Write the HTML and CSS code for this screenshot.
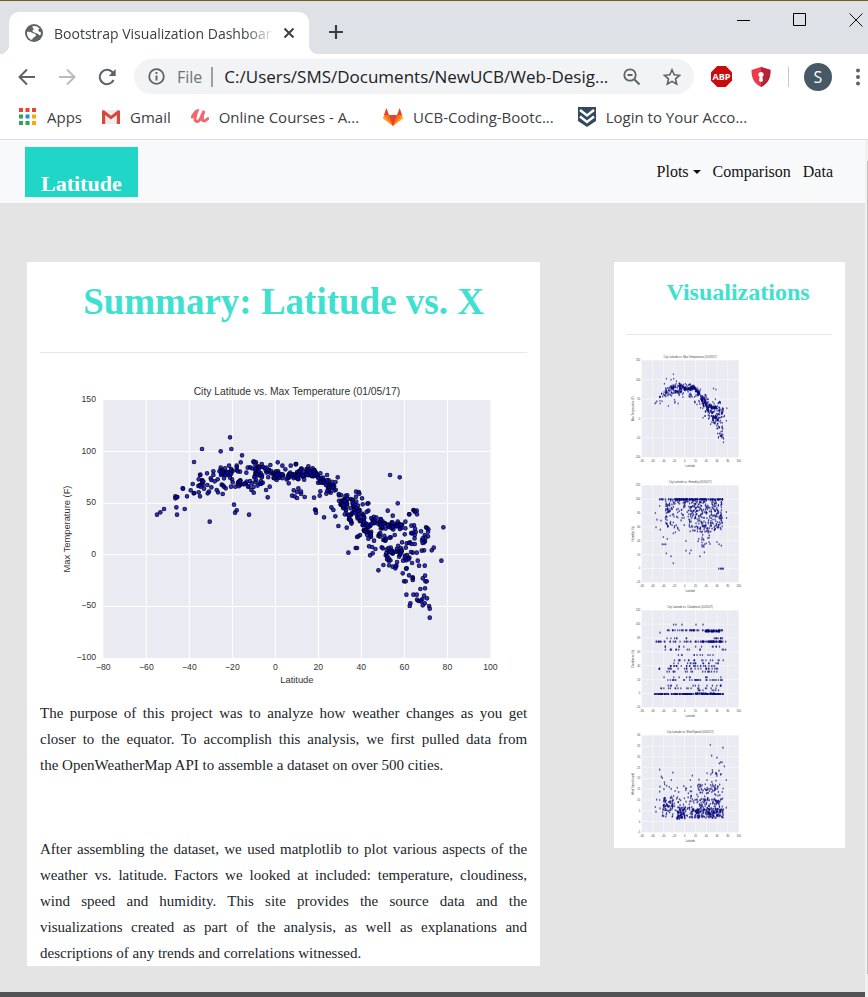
FILE: index.html
```
<!DOCTYPE html>
<html lang="en">
<head>
<meta charset="utf-8">
<title>Bootstrap Visualization Dashboard</title>
<link rel="stylesheet" href="styles.css">
</head>
<body>
<header class="browser">
  <div class="tabstrip">
    <div class="tab">
      <svg class="globe" viewBox="0 0 18 18"><circle cx="9" cy="9" r="9" fill="#5f6368"/><path d="M2 8c2-.5 4 .2 5.500 1 1.500.8 3.500.5 3.500 2s-1.500 1.500-2.500 2.500-1 2-2 2.300C4 15 2 12 2 9zM9 2c2 0 4 .8 5.500 2.500C13.500 5 13 6 13.500 7s2 1 2.500 1.500c0 1-.3 2-1 3-1-.5-1.500-1.500-3-2S8 8.500 7.500 7.300 9 6 8.800 5 7 4 7.500 2.200z" fill="#fff"/></svg>
      <span class="tab-title">Bootstrap Visualization Dashboar</span>
      <button class="icon-btn" aria-label="Close tab"><svg width="12" height="12" viewBox="0 0 12 12"><path d="M1.500 1.500l9 9M10.500 1.500l-9 9" stroke="#3c4043" stroke-width="2"/></svg></button>
    </div>
    <button class="icon-btn new-tab" aria-label="New tab"><svg width="16" height="16" viewBox="0 0 16 16"><path d="M8 1v14M1 8h14" stroke="#3c4043" stroke-width="2.200"/></svg></button>
    <div class="window-buttons">
      <button class="icon-btn" aria-label="Minimize"><svg width="14" height="14" viewBox="0 0 14 14"><path d="M0 7.500h13" stroke="#000"/></svg></button>
      <button class="icon-btn" aria-label="Maximize"><svg width="14" height="14" viewBox="0 0 14 14"><path d="M.5.5h12v12H.5z" stroke="#000" fill="none"/></svg></button>
      <button class="icon-btn" aria-label="Close"><svg width="14" height="14" viewBox="0 0 14 14"><path d="M.5.5l13 13M13.500.5l-13 13" stroke="#111"/></svg></button>
    </div>
  </div>
  <div class="toolbar">
    <button class="icon-btn" aria-label="Back"><svg width="18" height="18" viewBox="0 0 18 18"><path d="M17 9H2M9 1.500L1.500 9 9 16.500" stroke="#5f6368" stroke-width="2" fill="none"/></svg></button>
    <button class="icon-btn" aria-label="Forward"><svg width="18" height="18" viewBox="0 0 18 18"><path d="M1 9h15M9 1.500L16.500 9 9 16.500" stroke="#babcbe" stroke-width="2" fill="none"/></svg></button>
    <button class="icon-btn" aria-label="Reload"><svg width="18" height="18" viewBox="0 0 18 18"><path d="M15.500 12A7.200 7.200 0 1 1 14 3.800L16 6" stroke="#5f6368" stroke-width="2.100" fill="none"/><path d="M17.700 1v7h-7z" fill="#5f6368"/></svg></button>
    <div class="omnibox">
      <svg width="17" height="17" viewBox="0 0 17 17"><circle cx="8.500" cy="8.500" r="7.300" stroke="#5f6368" stroke-width="1.800" fill="none"/><path d="M8.500 7.500v5M8.500 4v2" stroke="#5f6368" stroke-width="1.900"/></svg>
      <label class="scheme" for="url">File</label>
      <input id="url" class="url" type="text" value="C:/Users/SMS/Documents/NewUCB/Web-Desig...">
      <button class="icon-btn" aria-label="Zoom"><svg width="18" height="18" viewBox="0 0 18 18"><circle cx="7" cy="7" r="5.700" stroke="#5f6368" stroke-width="1.800" fill="none"/><path d="M11.500 11.500l5 5M4.500 7h5" stroke="#5f6368" stroke-width="2"/></svg></button>
      <button class="icon-btn star" aria-label="Bookmark"><svg width="18" height="18" viewBox="0 0 18 18"><path d="M9 1.800l2.200 5 5.400.5-4.100 3.600 1.200 5.300L9 13.400l-4.700 2.800 1.200-5.300L1.400 7.300l5.400-.5z" stroke="#5f6368" stroke-width="1.600" fill="none"/></svg></button>
    </div>
    <button class="icon-btn" aria-label="Adblock Plus"><svg width="21" height="21" viewBox="0 0 21 21"><path d="M6.200 0h8.600L21 6.200v8.600L14.800 21H6.200L0 14.800V6.200z" fill="#c70d0d"/><text class="abp" x="10.500" y="14" text-anchor="middle">ABP</text></svg></button>
    <button class="icon-btn shield" aria-label="Shield"><svg width="20" height="20" viewBox="0 0 20 20"><path d="M10 0l9.500 3c0 8-2 13-9.500 17C2.500 16 .5 11 .5 3z" fill="#ee3a4a"/><path d="M10 0l9.500 3c0 8-2 13-9.500 17z" fill="#b32436"/><path d="M10 5a2.600 2.600 0 0 1 1.400 4.800L12 14l-2 1-2-1 .6-4.200A2.600 2.600 0 0 1 10 5z" fill="#fff"/></svg></button>
    <span class="divider"></span>
    <button class="avatar" aria-label="Profile">S</button>
    <button class="icon-btn" aria-label="Menu"><svg width="4" height="18" viewBox="0 0 4 18"><g fill="#5f6368"><circle cx="2" cy="2.500" r="2"/><circle cx="2" cy="9" r="2"/><circle cx="2" cy="15.500" r="2"/></g></svg></button>
  </div>
  <nav class="bookmarks" aria-label="Bookmarks">
    <a href="#"><svg width="18" height="18" viewBox="0 0 18 18"><path d="M0 0h4v4H0zM6.500 0h4v4h-4zM13 0h4v4h-4z" fill="#ea4335"/><path d="M0 6.500h4v4H0zM0 13h4v4H0zM6.500 13h4v4h-4z" fill="#34a053"/><path d="M6.500 6.500h4v4h-4z" fill="#2b85f0"/><path d="M13 6.500h4v4h-4zM13 13h4v4h-4z" fill="#fba90a"/></svg>Apps</a>
    <a href="#"><svg width="18" height="14" viewBox="0 0 18 14"><path d="M1 0h16v14H1z" fill="#eee"/><path d="M0 1.500V14h3.200V5L9 9.500 14.800 5v9H18V1.500C18 0 16.500 0 16 .3L9 5.800 2 .3C1.500 0 0 0 0 1.500z" fill="#d9463a"/></svg>Gmail</a>
    <a href="#"><svg width="18" height="16" viewBox="0 0 18 16"><path d="M1 8c2-2 3-5.500 5-6-2 5-3.500 11 .5 10.500C10 12 11 5 13 2c-2 5-2.500 10 0 10 1.500 0 2.500-1 4-2.500" stroke="#f2676b" stroke-width="3" stroke-linecap="round" fill="none"/></svg>Online Courses - A...</a>
    <a href="#" class="wide"><svg width="20" height="18" viewBox="0 0 20 18"><path d="M10 18L0 10.500 1 7h18l1 3.500z" fill="#fca326"/><path d="M10 18L1 7h18z" fill="#fc6d26"/><path d="M10 18L6 7h8zM3.300 0L6 7H1zM16.700 0L19 7h-5z" fill="#e24329"/></svg>UCB-Coding-Bootc...</a>
    <a href="#" class="wide"><svg width="18" height="20" viewBox="0 0 18 20"><path d="M0 0h18v14l-9 6-9-6z" fill="#34495e"/><path d="M2 3l7 5.500L16 3M2 9.500L9 15l7-5.500" stroke="#fff" stroke-width="2.400" fill="none"/></svg>Login to Your Acco...</a>
  </nav>
</header>
<div class="viewport">
  <div class="page">
    <nav class="navbar">
      <a class="brand" href="#">Latitude</a>
      <div class="links">
        <button class="dropdown">Plots<span class="caret"></span></button>
        <a href="#">Comparison</a>
        <a href="#">Data</a>
      </div>
    </nav>
    <main class="content">
      <article class="card summary">
        <h1>Summary: Latitude vs. X</h1>
        <hr>
        <svg id="main-chart" class="main-chart" viewBox="-30 0 1461 960" role="img" aria-label="City Latitude vs. Max Temperature"></svg>
        <p>The purpose of this project was to analyze how weather changes as you get closer to the equator. To accomplish this analysis, we first pulled data from the&nbsp;OpenWeatherMap API to assemble a dataset on over 500 cities.</p>
        <p>After assembling the dataset, we used matplotlib to plot various aspects of the weather vs. latitude. Factors we looked at included: temperature, cloudiness, wind speed and humidity. This site provides the source data and the visualizations created as part of the analysis, as well as explanations and descriptions of any trends and correlations witnessed.</p>
      </article>
      <aside class="card visualizations">
        <h2>Visualizations</h2>
        <hr>
        <div class="thumbs">
          <a href="#" aria-label="Max temperature"><svg id="thumb-temp" viewBox="0 0 375 375"></svg></a>
          <a href="#" aria-label="Humidity"><svg id="thumb-humidity" viewBox="0 0 375 375"></svg></a>
          <a href="#" aria-label="Cloudiness"><svg id="thumb-cloud" viewBox="0 0 375 375"></svg></a>
          <a href="#" aria-label="Wind speed"><svg id="thumb-wind" viewBox="0 0 375 375"></svg></a>
        </div>
      </aside>
    </main>
    <footer class="footer"></footer>
  </div>
  <div class="scrollbar"><div class="scroll-thumb"></div></div>
</div>
<script src="charts.js"></script>
</body>
</html>
```
FILE: styles.css
```
* { box-sizing: border-box; }
html, body { height: 100%; margin: 0; }
body {
  display: flex;
  flex-direction: column;
  overflow: hidden;
  background: #fff;
  font-family: "Liberation Serif", serif;
  font-size: 16px;
  color: #212529;
}
button { border: 0; padding: 0; background: none; font: inherit; color: inherit; }
a { color: inherit; text-decoration: none; }
svg { display: block; flex: none; }
.icon-btn { display: flex; flex: none; }

/* Browser frame */
.browser {
  flex: none;
  border-top: 1px solid #77591f;
  border-bottom: 1px solid #dadce0;
  font-family: "Open Sans", sans-serif;
  color: #3c4043;
}
.tabstrip {
  display: flex;
  align-items: flex-end;
  height: 53px;
  padding-left: 9px;
  background: #dee1e6;
}
.tab {
  position: relative;
  display: flex;
  align-items: center;
  width: 300px;
  height: 42px;
  padding: 0 14px 0 16px;
  border-radius: 10px 10px 0 0;
  background: #fff;
}
.tab::before, .tab::after {
  content: "";
  position: absolute;
  bottom: 0;
  width: 9px;
  height: 9px;
}
.tab::before { left: -9px; background: radial-gradient(circle at 0 0, transparent 9px, #fff 9px); }
.tab::after { right: -9px; background: radial-gradient(circle at 100% 0, transparent 9px, #fff 9px); }
.globe { width: 18px; height: 18px; }
.tab-title {
  flex: 1;
  margin: 0 8px 0 11px;
  white-space: nowrap;
  font-size: 14px;
  -webkit-mask-image: linear-gradient(to left, transparent, #000 30px);
  mask-image: linear-gradient(to left, transparent, #000 30px);
}
.new-tab { margin: 0 0 14px 19px; }
.window-buttons { display: flex; gap: 42px; margin: 0 5px 27px auto; }
.toolbar {
  display: flex;
  align-items: center;
  gap: 22px;
  height: 45px;
  padding: 0 8px 0 18px;
}
.omnibox {
  display: flex;
  flex: 1;
  align-items: center;
  min-width: 0;
  height: 35px;
  margin-left: -4px;
  margin-right: -5px;
  padding: 0 13px 0 14px;
  border-radius: 18px;
  background: #f1f3f4;
}
.scheme {
  margin: 0 11px 0 12px;
  padding-right: 9px;
  border-right: 2px solid #9aa0a6;
  font-size: 16px;
  line-height: 20px;
  color: #6f7377;
}
.url {
  flex: 1;
  min-width: 0;
  height: 28px;
  padding: 0;
  border: 0;
  background: none;
  font: 17px "Open Sans", sans-serif;
  color: #202124;
}
.star { margin-left: 22px; }
.abp { font: bold 9px "Open Sans", sans-serif; fill: #fff; }
.shield { margin-left: -3px; }
.divider { width: 1px; height: 20px; margin: 0 -7px 0 -5px; background: #c6c8cb; }
.avatar {
  flex: none;
  width: 28px;
  height: 28px;
  margin-right: 2px;
  border-radius: 50%;
  background: #455a64;
  color: #fff;
  font: 16px "Open Sans", sans-serif;
}
.bookmarks {
  display: flex;
  align-items: center;
  gap: 20px;
  height: 40px;
  padding: 0 19px 4px;
  font-size: 15px;
  white-space: nowrap;
}
.bookmarks a { display: flex; align-items: center; gap: 10px; }
.bookmarks .wide { margin-left: 4px; }

/* Page */
.viewport { display: flex; flex: 1; min-height: 0; }
.page { display: flex; flex: 1; flex-direction: column; min-width: 0; background: #e4e4e4; }
.scrollbar { width: 3px; padding: 21px 0 23px 2px; background: #f1f1f1; }
.scroll-thumb { height: 100%; background: #c1c1c1; }
.navbar {
  display: flex;
  align-items: center;
  justify-content: space-between;
  height: 63px;
  padding: 0 32px 0 25px;
  background: #f8f9fb;
}
.brand {
  padding: 25px 16px 1px;
  background: #20d6c7;
  color: #fff;
  font-size: 22px;
  line-height: 24px;
  font-weight: bold;
}
.links { display: flex; align-items: center; gap: 12px; font-size: 16px; color: #111; }
.dropdown { display: flex; align-items: center; gap: 4px; }
.caret { border: 4px solid transparent; border-top-color: #111; border-bottom: 0; }
.content {
  display: grid;
  grid-template-columns: 20fr 9fr;
  align-items: start;
  column-gap: 74px;
  padding: 59px 20px 26px 27px;
}
.card { background: #fff; }
.card hr { margin: 0; border: 0; border-top: 1px solid #e8e8e8; }
.summary { padding: 0 13px; }
.summary h1 {
  margin: 0 0 28px;
  padding-top: 18px;
  font-size: 37px;
  line-height: 44px;
  text-align: center;
  color: #40e0d0;
}
.main-chart { width: 100%; margin: 22px 0 5px; }
.summary p { margin: 0 0 58px; font-size: 15px; line-height: 26px; text-align: justify; }
.summary p:last-child { margin-bottom: 0; }
.visualizations { padding: 0 13px 0 12px; }
.visualizations h2 {
  margin: 0 0 28px;
  padding: 16px 0 0 18px;
  font-size: 24px;
  line-height: 28px;
  text-align: center;
  color: #40e0d0;
}
.thumbs { padding-top: 13px; }
.thumbs svg { width: 125px; }
.footer { flex: 1; background: #535355; }

/* Charts */
.plot-area { fill: #eaeaf2; }
.grid { stroke: #fff; stroke-width: 3; }
.point { fill: #0000ff; fill-opacity: .8; stroke: #000; stroke-opacity: .8; stroke-width: 3; }
.label { font-family: "Liberation Sans", sans-serif; font-size: 26px; fill: #333; }
.axis { font-size: 28px; }
.title { font-size: 31px; }
.thumb .grid { stroke-width: 2; stroke-opacity: .7; }
.thumb .point { fill: #08087c; fill-opacity: .7; stroke: none; }
.thumb .label { font-size: 8px; fill: #444; }
```
FILE: charts.js
```
const NS = "http://www.w3.org/2000/svg";

function add(parent, tag, attrs, text) {
  const el = document.createElementNS(NS, tag);
  for (const key in attrs) el.setAttribute(key, attrs[key]);
  if (text !== undefined) el.textContent = text;
  parent.appendChild(el);
  return el;
}

function generator(seed) {
  return () => {
    seed = (seed * 1664525 + 1013904223) % 4294967296;
    return seed / 4294967296;
  };
}

const minus = v => String(v).replace("-", "\u2212");

// Draws axes and points; points are given as fractions of the plot area.
function drawChart(id, o) {
  const svg = document.getElementById(id);
  const { x, y, w, h } = o.area;
  if (o.thumb) svg.classList.add("thumb");
  add(svg, "rect", { x, y, width: w, height: h, class: "plot-area" });
  for (let i = 0; i <= 9; i++) {
    const gx = x + w * i / 9;
    if (i > 0 && i < 9) add(svg, "path", { d: `M${gx} ${y}v${h}`, class: "grid" });
    add(svg, "text", { x: gx, y: y + h + o.xGap, "text-anchor": "middle", class: "label" }, minus(-80 + 20 * i));
  }
  o.ticks.forEach((t, i) => {
    const gy = y + h - h * i / (o.ticks.length - 1);
    if (i > 0 && i < o.ticks.length - 1) add(svg, "path", { d: `M${x} ${gy}h${w}`, class: "grid" });
    add(svg, "text", { x: x - o.yGap, y: gy + o.drop, "text-anchor": "end", class: "label" }, minus(t));
  });
  add(svg, "text", { x: x + w / 2, y: y - o.titleGap, "text-anchor": "middle", class: "label title" }, o.title);
  add(svg, "text", { x: x + w / 2, y: y + h + o.nameGap, "text-anchor": "middle", class: "label axis" }, "Latitude");
  const nx = x - o.sideGap, ny = y + h / 2;
  add(svg, "text", { x: nx, y: ny, "text-anchor": "middle", transform: `rotate(-90 ${nx} ${ny})`, class: "label axis" }, o.name);
  for (const [px, py] of o.points) {
    add(svg, "ellipse", { cx: (x + px * w).toFixed(1), cy: (y + py * h).toFixed(1), rx: o.rx, ry: o.ry, class: "point" });
  }
}

// Temperature readings, in main chart units.
const readings = `540,187 456,222 544,222 512,229 576,241 432,261 572,262 398,340 399,341 428,327 422,346 431,355 433,354
411,364 376,364 380,367 376,370 382,366 379,397 404,402 342,402 331,412 321,419 381,419 479,440 552,389 560,406 555,413
597,419 450,300 451,299 471,295 490,289 490,300 482,310 484,315 494,319 503,313 446,313 456,315 456,325 450,330 458,330
462,341 446,352 450,364 448,332 452,335 460,320 457,318 445,333 472,330 484,337 500,345 504,352 518,357 477,350 473,355
512,278 512,285 525,280 537,272 513,300 515,287 520,291 526,296 530,300 540,295 545,285 540,300 548,288 522,310 515,329
518,331 522,335 527,340 546,313 548,322 540,308 543,335 556,335 560,272 560,277 560,285 570,290 563,289 565,325 570,330
580,328 587,325 590,320 600,318 605,325 596,335 604,345 611,353 589,293 593,278 600,277 606,280 610,260 618,262 612,260
635,267 625,280 648,345 653,367 659,335 634,325 628,326 638,323 683,262 661,270 716,325 737,268 726,362 734,364 741,369
738,267 697,272 706,283 722,272 764,366 731,346 741,351 745,340 753,350 753,357 775,274 738,267 792,368 809,362 811,349
829,356 842,353 863,307 831,300 814,310 811,295 788,280 789,290 795,404 797,405 798,413 822,427 865,453 890,458 844,397
850,405 856,424 895,533 917,519 921,519 918,350 926,351 928,356 936,370 955,385 952,386 955,407 924,392 918,365 902,372
1020,300 1049,307 1043,385 1013,407 1028,422 1077,418 1078,418 1090,405 1092,407 1100,407 1095,411 1101,418 1043,440
1066,440 1180,457 1174,557 1151,518 1145,526 1122,526 1115,527 1100,533 1088,533 1083,531 1103,557 1107,572 1124,572
1086,564 1058,595 1077,601 1088,607 1088,610 1088,615 1062,619 1067,619 1118,610 1125,602 1126,619 1130,619 1125,640
1111,642 1069,659 1090,659 1100,659 1122,662 1131,670 1101,674 1105,678 1113,677 1117,672 1112,679 1081,685 1079,693
1124,685 1118,691 1137,693 1139,701 1139,728 985,586 960,541 968,535 976,522 966,516 957,514 995,517 998,520 1007,541
1128,457 1131,459 1135,463 1134,470 1113,469 1124,480 1134,484 1126,488 1116,496 1125,498 1118,490 1123,502 1086,475
1094,480 1097,471 1092,451 1084,452 1066,460 1064,478 1056,502 1070,505 1080,502 1094,507 1077,504 1067,518 1085,507
1028,575 1036,580 1041,561 1037,574 1039,572 1070,580 1068,581 1059,557 1017,571 1016,557 1021,556 1000,570 1050,458
1022,487 1019,488 1034,480 1000,495 1005,496 987,478 985,483 963,485 955,491 972,497 921,486 925,484 930,480 941,465
938,388 1071,540 1065,542 1074,549 1078,548 1068,551 1064,548 1076,553 1068,556 1052,532 1049,540 1047,545 1012,544
1011,553 1016,550 1009,534 1019,530 1010,524 1022,518 1028,536`.trim().split(/\s+/).map(p => p.split(",").map(Number));

// Dense bands: x from, x to, y at start, y at end, spread, count.
const bands = [
  [508, 560, 290, 297, 14, 12], [560, 625, 326, 328, 12, 10], [612, 690, 285, 298, 15, 38],
  [610, 640, 312, 315, 14, 8], [672, 742, 302, 298, 14, 32], [735, 800, 296, 293, 14, 42],
  [800, 862, 315, 342, 16, 42], [865, 893, 372, 380, 16, 22], [876, 905, 395, 435, 14, 20],
  [888, 945, 378, 415, 17, 22], [905, 945, 415, 440, 13, 12], [938, 964, 460, 465, 18, 22],
  [965, 1005, 432, 450, 12, 16], [990, 1058, 450, 452, 11, 34], [1015, 1055, 525, 530, 12, 18],
  [940, 978, 410, 450, 16, 7], [1072, 1140, 475, 480, 24, 5], [985, 1010, 470, 490, 12, 6]
];
const rnd = generator(17);
for (const [x0, x1, y0, y1, spread, count] of bands) {
  for (let i = 0; i < count; i++) {
    const t = rnd();
    readings.push([x0 + (x1 - x0) * t, y0 + (y1 - y0) * t + (rnd() + rnd() - 1) * spread * 1.4]);
  }
}
const temperature = readings.map(([x, y]) => [(x - 160) / 1161, (y - 75) / 774]);

drawChart("main-chart", {
  area: { x: 160, y: 75, w: 1161, h: 774 }, ticks: [-100, -50, 0, 50, 100, 150],
  title: "City Latitude vs. Max Temperature (01/05/17)", name: "Max Temperature (F)",
  xGap: 37, yGap: 22, drop: 6, titleGap: 15, nameGap: 76, sideGap: 101,
  points: temperature, rx: 5.5, ry: 5.5
});

// Thumbnail data, in 3x units of the 291-unit plot square.
const r = generator(5);
const humidity = [[41, 83], [43, 126], [46, 103], [54, 62], [56, 133], [58, 106], [65, 155], [62, 177], [67, 177], [72, 177], [77, 161], [74, 204], [88, 213], [95, 234], [95, 144], [101, 141], [112, 135], [133, 196], [133, 167], [144, 204], [148, 195], [175, 213], [185, 181], [188, 201], [205, 176], [226, 170], [232, 177], [239, 181], [254, 80], [255, 98], [231, 250], [236, 250], [239, 250], [242, 250], [245, 250]];
for (let i = 0; i < 135; i++) humidity.push([(i < 12 ? 52 : 90) + r() * (i < 12 ? 40 : 155), 42]);
for (let i = 0; i < 150; i++) humidity.push([70 + r() * 170, 44 + r() * r() * 75]);
for (let i = 0; i < 105; i++) humidity.push([140 + r() * 70, 62 + r() * 78]);
for (let i = 0; i < 75; i++) humidity.push([207 + r() * 35, 55 + r() * 80]);
for (let i = 0; i < 35; i++) humidity.push([165 + r() * 38, 120 + r() * 65]);
for (let i = 0; i < 22; i++) humidity.push([72 + r() * 7, 50 + r() * 74]);
for (let i = 0; i < 25; i++) humidity.push([75 + r() * 65, 70 + r() * 60]);

const clouds = [[96, 43], [103, 43], [121, 43], [163, 43], [184, 43], [55, 67], [252, 118], [52, 176], [67, 201]];
const rows = [[60, 70, 125, 12], [60, 125, 245, 42], [63, 190, 235, 46], [84, 70, 135, 7], [84, 205, 245, 9], [94, 40, 255, 44], [94, 180, 240, 35],
  [109, 70, 245, 12], [118, 70, 255, 13], [134, 85, 240, 11], [150, 80, 245, 18], [159, 85, 245, 16], [167, 80, 245, 26], [175, 52, 240, 24],
  [184, 70, 240, 17], [201, 68, 240, 9], [209, 75, 243, 32], [226, 70, 240, 13], [234, 50, 245, 18], [240, 150, 240, 8],
  [251, 38, 125, 60], [251, 125, 245, 105], [249, 160, 220, 18]];
for (const [y, x0, x1, n] of rows) for (let i = 0; i < n; i++) clouds.push([x0 + r() * (x1 - x0), y]);

const wind = [[206, 29], [244, 37], [210, 61], [226, 67], [237, 81], [241, 81], [233, 84], [248, 93], [54, 103], [94, 112], [59, 124], [62, 128], [89, 134], [152, 121], [254, 134], [254, 217], [41, 215], [43, 229], [45, 193], [54, 194], [55, 154], [54, 169], [55, 219], [68, 141], [69, 147], [212, 104], [213, 110], [232, 106], [237, 118], [172, 133], [196, 134], [146, 134]];
for (let i = 0; i < 165; i++) wind.push([150 + r() * 95, 220 + r() * 28]);
for (let i = 0; i < 100; i++) wind.push([150 + r() * 95, 190 + r() * 45]);
for (let i = 0; i < 80; i++) wind.push([105 + r() * 25, 216 + r() * 35]);
for (let i = 0; i < 18; i++) wind.push([130 + r() * 22, 205 + r() * 45]);
for (let i = 0; i < 65; i++) wind.push([62 + r() * 37, 185 + r() * 60]);
for (let i = 0; i < 45; i++) wind.push([66 + r() * 85, 150 + r() * 80]);
for (let i = 0; i < 65; i++) wind.push([165 + r() * 80, 145 + r() * 60]);
for (let i = 0; i < 22; i++) wind.push([190 + r() * 55, 110 + r() * 60]);

const unit = list => list.map(([x, y]) => [x / 291, y / 291]);
const thumb = {
  thumb: true, area: { x: 47, y: 37, w: 291, h: 291 },
  xGap: 13, yGap: 4, drop: 3, titleGap: 6, nameGap: 28, sideGap: 23, rx: 2.2, ry: 3.2
};
drawChart("thumb-temp", { ...thumb, ticks: [-100, -50, 0, 50, 100, 150], title: "City Latitude vs. Max Temperature (01/05/17)", name: "Max Temperature (F)", points: temperature, rx: 2, ry: 3 });
drawChart("thumb-humidity", { ...thumb, ticks: [-20, 0, 20, 40, 60, 80, 100, 120], title: "City Latitude vs. Humidity (01/05/17)", name: "Humidity (%)", points: unit(humidity) });
drawChart("thumb-cloud", { ...thumb, ticks: [-20, 0, 20, 40, 60, 80, 100, 120], title: "City Latitude vs. Cloudiness (01/05/17)", name: "Cloudiness (%)", points: unit(clouds) });
drawChart("thumb-wind", { ...thumb, ticks: [-5, 0, 5, 10, 15, 20, 25, 30, 35, 40], title: "City Latitude vs. Wind Speed (01/05/17)", name: "Wind Speed (mph)", points: unit(wind) });
```
